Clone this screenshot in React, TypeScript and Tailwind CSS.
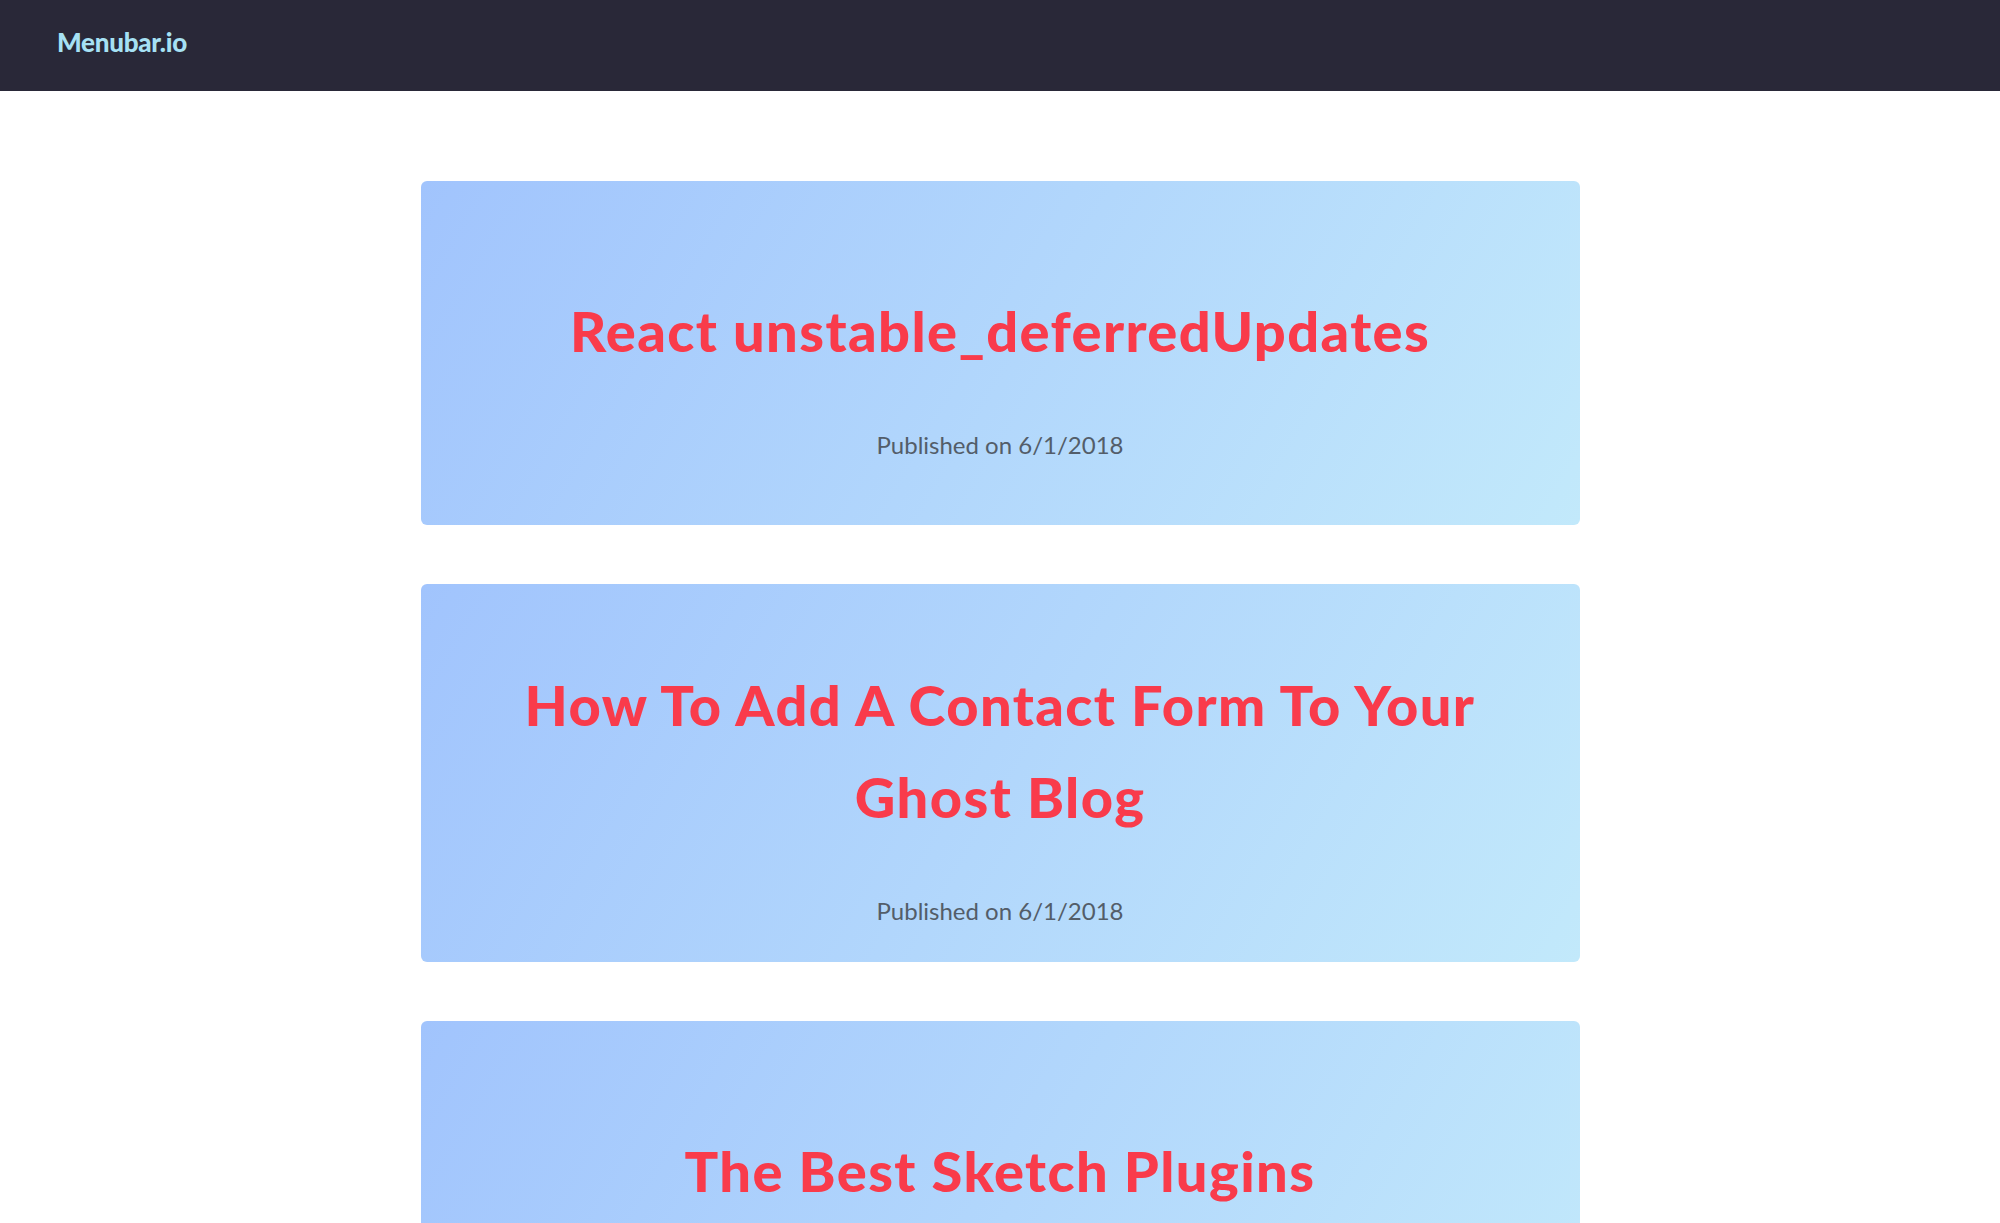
const posts = [
  { title: "React unstable_deferredUpdates", date: "6/1/2018" },
  { title: "How To Add A Contact Form To Your Ghost Blog", date: "6/1/2018" },
  { title: "The Best Sketch Plugins", date: "6/1/2018" },
];

function PostCard({ title, date }: { title: string; date: string }) {
  return (
    <a
      href="#"
      className="flex min-h-[344px] flex-col justify-center rounded-md bg-[linear-gradient(120deg,#a1c4fd_0%,#c2e9fb_100%)] px-[56px] pt-[75px] pb-[33px] text-center"
    >
      <h2 className="text-[56px] leading-[92px] font-black tracking-[0.025em] text-[#f93b4b]">{title}</h2>
      <p className="mt-[50px] text-[24px] leading-[36px] text-[#535d69]">Published on {date}</p>
    </a>
  );
}

export default function App() {
  return (
    <div className="min-h-screen bg-white font-['Lato','Liberation_Sans',sans-serif]">
      <header className="flex h-[91px] items-center bg-[#292838] px-[57px]">
        <a href="#" className="mb-[7px] text-[26px] font-black tracking-[-0.01em] text-[#a6e1f4]">
          Menubar.io
        </a>
      </header>
      <main className="mx-auto flex w-[1159px] flex-col gap-[59px] pt-[90px] pb-[60px]">
        {posts.map((p) => (
          <PostCard key={p.title} title={p.title} date={p.date} />
        ))}
      </main>
    </div>
  );
}
